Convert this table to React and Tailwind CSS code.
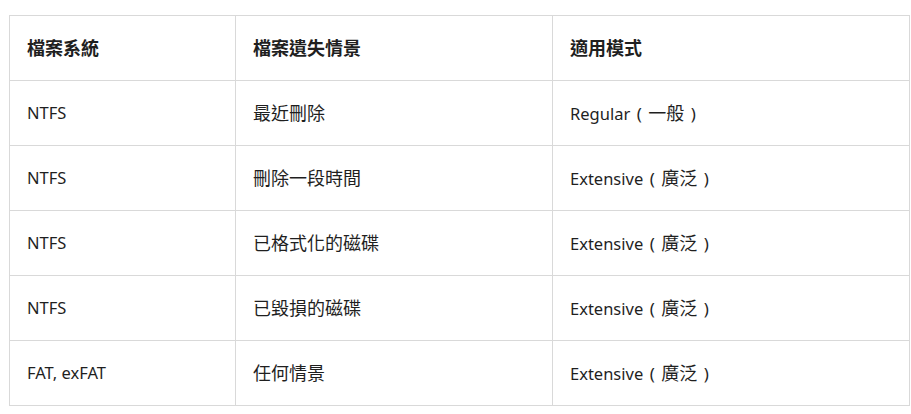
import React from "react";

const C = ({ children }) => <span className="text-[18px]">{children}</span>;
const P = ({ children }) => (
  <span className="inline-block w-[18px] text-center text-[17px]">{children}</span>
);
const Mode = ({ en, zh }) => (
  <>
    {en}
    <P>(</P>
    <C>{zh}</C>
    <P>)</P>
  </>
);

const rows = [
  ["NTFS", "最近刪除", <Mode en="Regular" zh="一般" />],
  ["NTFS", "刪除一段時間", <Mode en="Extensive" zh="廣泛" />],
  ["NTFS", "已格式化的磁碟", <Mode en="Extensive" zh="廣泛" />],
  ["NTFS", "已毀損的磁碟", <Mode en="Extensive" zh="廣泛" />],
  ["FAT, exFAT", "任何情景", <Mode en="Extensive" zh="廣泛" />],
];

export default function App() {
  return (
    <div className="w-[911px] h-[414px] bg-white pt-[15px] pl-[9px] text-[16.5px] text-[#1f1f1f] font-['Noto_Sans','Noto_Sans_CJK_TC',sans-serif]">
      <table className="table-fixed border-collapse w-[900px]">
        <colgroup>
          <col className="w-[226px]" />
          <col className="w-[317px]" />
          <col className="w-[357px]" />
        </colgroup>
        <thead>
          <tr className="h-[65px]">
            {["檔案系統", "檔案遺失情景", "適用模式"].map((h, i) => (
              <th
                key={i}
                className="border border-[#d9d9d9] px-[17px] text-left align-middle font-bold"
              >
                <C>{h}</C>
              </th>
            ))}
          </tr>
        </thead>
        <tbody>
          {rows.map((r, i) => (
            <tr key={i} className="h-[65px]">
              <td className="border border-[#d9d9d9] px-[17px] align-middle">{r[0]}</td>
              <td className="border border-[#d9d9d9] px-[17px] align-middle">
                <C>{r[1]}</C>
              </td>
              <td className="border border-[#d9d9d9] px-[17px] align-middle">{r[2]}</td>
            </tr>
          ))}
        </tbody>
      </table>
    </div>
  );
}
